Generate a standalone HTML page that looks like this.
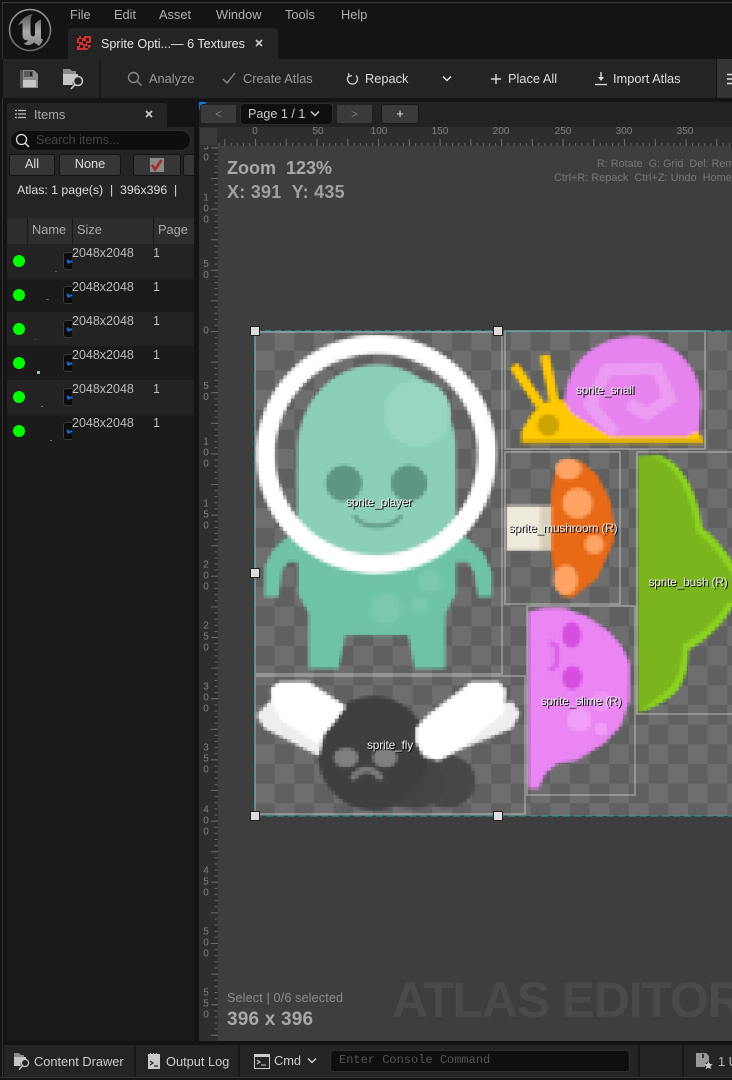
<!DOCTYPE html>
<html><head><meta charset="utf-8"><title>Sprite Optimizer</title>
<style>
html,body{margin:0;padding:0;background:#141414}
#r{position:relative;width:732px;height:1080px;overflow:hidden;background:#141414;font-family:"Liberation Sans",sans-serif;font-size:12.8px;color:#ccc}
.a{position:absolute}
.t{position:absolute;white-space:nowrap;line-height:16px}
.l{position:absolute;white-space:nowrap;line-height:16px;font-size:12px;color:#eee;text-shadow:1px 1px 0 #000;transform:translateX(-50%);letter-spacing:-.2px}
.m{color:#b0b0b0;top:7px}
.b{position:absolute;background:#363636;border:1px solid #111;border-radius:3px;box-sizing:border-box;text-align:center;color:#ddd;line-height:18px}
.rt{position:absolute;top:126px;font-size:10px;line-height:12px;color:#808080;transform:translateX(-50%)}
.rl{position:absolute;left:200px;width:12px;text-align:center;font-size:10px;line-height:11px;color:#808080;transform:translateY(-50%)}
.row{position:absolute;left:7px;width:187px;height:34px}
.dot{position:absolute;left:6px;top:11px;width:12px;height:12px;border-radius:50%;background:#0f0}
.th{position:absolute;left:56px;top:8px;width:9px;height:18px;background:#0c0c0c;border:1px solid #3a3a3a;border-right:0;border-radius:3px 0 0 3px;box-sizing:border-box}
.th:after{content:"";position:absolute;left:3px;top:6px;width:5px;height:4px;border-left:2px solid #1470d8;border-bottom:2px solid #1470d8;transform:rotate(-20deg);box-sizing:border-box}
.sz{position:absolute;left:65px;top:1px;line-height:16px;color:#bbb;font-size:12.5px}
.pg{position:absolute;left:146px;top:1px;line-height:16px;color:#bbb;font-size:12.5px}
.pd{position:absolute;width:1px;height:1px}
</style></head><body><div id="r">

<div class="a" style="left:2px;top:2px;width:730px;height:1px;background:#3a3a3a"></div>
<div class="a" style="left:2px;top:2px;width:1px;height:1076px;background:#333"></div>

<svg class="a" style="left:8px;top:8px" width="44" height="44" viewBox="0 0 44 44">
<defs><linearGradient id="lg" x1="0" y1="0" x2="0" y2="1"><stop offset="0" stop-color="#9a9a9a"/><stop offset="1" stop-color="#6a6a6a"/></linearGradient>
<linearGradient id="ug" x1="0" y1="0" x2="0" y2="1"><stop offset="0" stop-color="#555"/><stop offset=".55" stop-color="#aaa"/><stop offset="1" stop-color="#888"/></linearGradient></defs>
<circle cx="22" cy="22" r="20.5" fill="#111" stroke="url(#lg)" stroke-width="1.6"/>
<path fill="url(#ug)" d="M25 6 C19 7 13 11 10 18 C12 16 13 15.5 14.5 15 L14.5 27 C14.5 31 17 33 20 32 C19.5 33.5 17.5 35 15.5 35.5 C19 38 23 37.5 26 34.5 L31 38 C33 36 34.5 33.5 35 31 C33.5 31.5 33 31 33 29.5 L33 11.5 C31 12 29 13.5 27 16 L27 26 C27 28 25.5 29 24 28 C23 27.5 22.5 26.5 22.5 25 L22.5 12 C22.5 10 23.5 8 25 6Z"/>
</svg>

<div class="t m" style="left:70px">File</div>
<div class="t m" style="left:114px">Edit</div>
<div class="t m" style="left:159px">Asset</div>
<div class="t m" style="left:216px">Window</div>
<div class="t m" style="left:285px">Tools</div>
<div class="t m" style="left:341px">Help</div>

<div class="a" style="left:68px;top:28px;width:210px;height:31px;background:#242424;border-radius:4px 4px 0 0"></div>
<svg class="a" style="left:77px;top:36px" width="14" height="14" viewBox="0 0 14 14"><rect width="14" height="14" fill="#c33"/><path fill="#301010" d="M0 0h2v2H0zM4 0h3v2H4zM9 2h3v3H9zM2 3h3v3H2zM6 5h3v3H6zM0 7h2v3H0zM10 7h4v2h-4zM3 9h3v3H3zM8 10h3v2H8z"/><path fill="#242424" d="M14 14h-4l4-4z"/></svg>
<div class="t" style="left:101px;top:36px;color:#e6e6e6;font-size:12.6px">Sprite Opti...— 6 Textures</div>
<svg class="a" style="left:255px;top:39px" width="8" height="8"><path d="M1 1l6 6M7 1l-6 6" stroke="#ccc" stroke-width="1.6"/></svg>

<div class="a" style="left:0;top:59px;width:716px;height:39px;background:#242424"></div>
<div class="a" style="left:0;top:59px;width:3px;height:39px;background:#141414"></div>
<div class="a" style="left:717px;top:59px;width:15px;height:39px;background:#343434"></div>
<div class="a" style="left:99px;top:60px;width:2px;height:38px;background:#181818"></div>
<svg class="a" style="left:20px;top:70px" width="18" height="18" viewBox="0 0 18 18"><path fill="#8c8c8c" d="M0 0h14l4 4v14H0z"/><path fill="#555" d="M0 0h3v18H0z"/><rect x="4" y="1" width="9" height="6" fill="#5a5a5a"/><rect x="10" y="2" width="2" height="4" fill="#222"/><rect x="3" y="10" width="13" height="7" fill="#c8c8c8"/></svg>
<svg class="a" style="left:63px;top:69px" width="21" height="21" viewBox="0 0 21 21"><path fill="#8a8a8a" d="M0 0h7l2 2h4v3H0z"/><path fill="#c6c6c6" d="M0 5h15v3a6 6 0 0 0-5 8H0z"/><circle cx="15" cy="12" r="4.5" fill="none" stroke="#ccc" stroke-width="1.5"/><path d="M12 15.5L8 20" stroke="#ccc" stroke-width="1.6"/></svg>

<svg class="a" style="left:127px;top:71px" width="16" height="16" viewBox="0 0 16 16"><circle cx="6.5" cy="6.5" r="5" fill="none" stroke="#888" stroke-width="1.4"/><path d="M10.2 10.2L14.5 14.5" stroke="#888" stroke-width="1.4"/></svg>
<div class="t" style="left:149px;top:71px;color:#999">Analyze</div>
<svg class="a" style="left:222px;top:72px" width="14" height="13" viewBox="0 0 14 13"><path d="M1 7l4 4 8-10" fill="none" stroke="#888" stroke-width="1.4"/></svg>
<div class="t" style="left:243px;top:71px;color:#999">Create Atlas</div>
<svg class="a" style="left:346px;top:72px" width="13" height="14" viewBox="0 0 13 14"><path d="M3 3.5A5 5 0 1 0 10 3.5" fill="none" stroke="#ccc" stroke-width="1.3"/><path d="M2.5 1L3 4.5 6 3.5" fill="none" stroke="#ccc" stroke-width="1.2"/></svg>
<div class="t" style="left:365px;top:71px;color:#ddd">Repack</div>
<svg class="a" style="left:442px;top:75px" width="10" height="8"><path d="M1 1.5l4 4 4-4" fill="none" stroke="#ddd" stroke-width="1.5"/></svg>
<svg class="a" style="left:491px;top:74px" width="10" height="10"><path d="M5 0v10M0 5h10" stroke="#ddd" stroke-width="1.4"/></svg>
<div class="t" style="left:508px;top:71px;color:#ddd">Place All</div>
<svg class="a" style="left:595px;top:72px" width="12" height="14" viewBox="0 0 12 14"><path d="M6 0v7" stroke="#ddd" stroke-width="1.4"/><path d="M3 5h6L6 9z" fill="#ddd"/><path d="M0 12.5h12" stroke="#ddd" stroke-width="1.3"/></svg>
<div class="t" style="left:613px;top:71px;color:#ddd">Import Atlas</div>
<svg class="a" style="left:727px;top:73px" width="5" height="12"><path d="M0 1.5h5M0 6h5M0 10.5h5" stroke="#ddd" stroke-width="1.6"/></svg>

<!-- left panel -->
<div class="a" style="left:7px;top:103px;width:160px;height:24px;background:#242424;border-radius:3px 3px 0 0"></div>
<div class="a" style="left:7px;top:127px;width:187px;height:914px;background:#1a1a1a"></div>
<div class="a" style="left:7px;top:127px;width:187px;height:91px;background:#242424"></div>
<svg class="a" style="left:15px;top:109px" width="11" height="10"><path d="M3 1.5h8M3 5h8M3 8.5h8M0 1.5h2M0 5h2M0 8.5h2" stroke="#bbb" stroke-width="1.2"/></svg>
<div class="t" style="left:34px;top:107px;color:#aaa">Items</div>
<svg class="a" style="left:145px;top:110px" width="8" height="8"><path d="M1 1l6 6M7 1l-6 6" stroke="#ccc" stroke-width="1.7"/></svg>
<div class="a" style="left:10px;top:130px;width:181px;height:21px;background:#0e0e0e;border:1px solid #2c2c2c;border-radius:11px;box-sizing:border-box"></div>
<svg class="a" style="left:15px;top:133px" width="15" height="15" viewBox="0 0 15 15"><circle cx="6.5" cy="6.5" r="5" fill="none" stroke="#ddd" stroke-width="1.3"/><path d="M10 10l4 4" stroke="#ddd" stroke-width="1.5"/></svg>
<div class="t" style="left:36px;top:132px;color:#444;font-size:12.5px">Search items...</div>
<div class="b" style="left:9px;top:154px;width:46px;height:22px">All</div>
<div class="b" style="left:59px;top:154px;width:62px;height:22px">None</div>
<div class="b" style="left:133px;top:154px;width:48px;height:22px"></div>
<div class="b" style="left:183px;top:154px;width:11px;height:22px;border-right:0;border-radius:3px 0 0 3px"></div>
<svg class="a" style="left:150px;top:158px" width="14" height="14" viewBox="0 0 14 14"><rect width="14" height="14" fill="#8a8a8a"/><path d="M2 7l3 4.5L11.5 2" fill="none" stroke="#a52a2a" stroke-width="2.6"/></svg>
<div class="t" style="left:17px;top:182px;color:#ddd;font-size:12.3px;white-space:pre">Atlas: 1 page(s)  |  396x396  |</div>

<div class="a" style="left:7px;top:218px;width:187px;height:26px;background:#2e2e2e"></div>
<div class="a" style="left:27px;top:218px;width:1px;height:26px;background:#181818"></div>
<div class="a" style="left:72px;top:218px;width:1px;height:26px;background:#181818"></div>
<div class="a" style="left:153px;top:218px;width:1px;height:26px;background:#181818"></div>
<div class="t" style="left:32px;top:222px;color:#aaa">Name</div>
<div class="t" style="left:77px;top:222px;color:#aaa">Size</div>
<div class="t" style="left:158px;top:222px;color:#aaa">Page</div>

<div class="row" style="top:244px;background:#232323"><div class="dot"></div><div class="th"></div><div class="sz">2048x2048</div><div class="pg">1</div><div class="pd" style="left:48px;top:27px;background:#5a6a30;width:2px"></div></div>
<div class="row" style="top:278px;background:#1b1b1b"><div class="dot"></div><div class="th"></div><div class="sz">2048x2048</div><div class="pg">1</div><div class="pd" style="left:39px;top:21px;background:#666;width:3px"></div></div>
<div class="row" style="top:312px;background:#232323"><div class="dot"></div><div class="th"></div><div class="sz">2048x2048</div><div class="pg">1</div><div class="pd" style="left:28px;top:27px;background:#6a4a3a"></div></div>
<div class="row" style="top:346px;background:#1b1b1b"><div class="dot"></div><div class="th"></div><div class="sz">2048x2048</div><div class="pg">1</div><div class="pd" style="left:30px;top:25px;background:#8fbfae;width:3px;height:3px"></div></div>
<div class="row" style="top:380px;background:#232323"><div class="dot"></div><div class="th"></div><div class="sz">2048x2048</div><div class="pg">1</div><div class="pd" style="left:34px;top:26px;background:#8a5a90;width:2px"></div></div>
<div class="row" style="top:414px;background:#1b1b1b"><div class="dot"></div><div class="th"></div><div class="sz">2048x2048</div><div class="pg">1</div><div class="pd" style="left:43px;top:26px;background:#905a70;width:2px"></div></div>

<!-- page bar -->
<div class="a" style="left:199px;top:102px;width:533px;height:25px;background:#222"></div>
<svg class="a" style="left:199px;top:102px" width="8" height="8"><path d="M0 0h8L0 8z" fill="#1476e0"/></svg>
<div class="b" style="left:200px;top:104px;width:37px;height:20px;background:#3a3a3a;border-color:#222;color:#777;font-size:12px">&lt;</div>
<div class="a" style="left:240px;top:103px;width:93px;height:22px;background:#0f0f0f;border:1px solid #2c2c2c;border-radius:4px;box-sizing:border-box"></div>
<div class="t" style="left:248px;top:106px;color:#ccc;font-size:12.6px">Page 1 / 1</div>
<svg class="a" style="left:310px;top:110px" width="10" height="8"><path d="M1 1.5l4 4 4-4" fill="none" stroke="#ccc" stroke-width="1.5"/></svg>
<div class="b" style="left:336px;top:104px;width:37px;height:20px;background:#3a3a3a;border-color:#222;color:#777;font-size:12px">&gt;</div>
<div class="b" style="left:381px;top:104px;width:38px;height:20px;background:#3a3a3a;border-color:#181818;color:#eee;font-size:13px">+</div>

<!-- viewport -->
<svg class="a" style="left:0;top:0" width="732" height="1080" viewBox="0 0 732 1080">
<defs>
<pattern id="ck" x="255" y="331" width="39.36" height="39.36" patternUnits="userSpaceOnUse">
<rect width="39.36" height="39.36" fill="#606060"/>
<rect x="19.68" width="19.68" height="19.68" fill="#6e6e6e"/>
<rect y="19.68" width="19.68" height="19.68" fill="#6e6e6e"/>
</pattern>
<filter id="px" filterUnits="userSpaceOnUse" x="251" y="327" width="500" height="500" color-interpolation-filters="sRGB">
<feGaussianBlur in="SourceGraphic" stdDeviation="1.3" result="s"/>
<feFlood x="256" y="332" width="2" height="2" flood-color="#000"/>
<feComposite x="255" y="331" width="4" height="4"/>
<feTile x="251" y="327" width="500" height="500" result="a"/>
<feComposite in="s" in2="a" operator="in"/>
<feMorphology operator="dilate" radius="1"/>
</filter>
<clipPath id="cv"><rect x="218" y="146" width="514" height="895"/></clipPath>
</defs>
<rect x="199" y="127" width="533" height="914" fill="#2e2e2e"/>
<rect x="200" y="128" width="17" height="17" fill="#3a3a3a"/>
<rect x="218" y="146" width="514" height="895" fill="#3e3e3e"/>
<line x1="224.25" y1="142.5" x2="732" y2="142.5" stroke="#6a6a6a" stroke-width="7" stroke-dasharray="1 29.75"/>
<line x1="218.4" y1="144.5" x2="732" y2="144.5" stroke="#6a6a6a" stroke-width="3" stroke-dasharray="1 5.15"/>
<line x1="214.5" y1="147.4" x2="214.5" y2="1041" stroke="#6a6a6a" stroke-width="7" stroke-dasharray="1 29.6"/>
<line x1="216" y1="147.4" x2="216" y2="1041" stroke="#6a6a6a" stroke-width="3" stroke-dasharray="1 5.12"/>

<g clip-path="url(#cv)">
<rect x="255" y="331" width="487" height="485" fill="url(#ck)"/>
<g filter="url(#px)">
 <!-- player -->
 <g transform="translate(245 320) scale(.33333)">
  <path fill="#6fc3a8" d="M130 650L85 690 60 740 60 830 100 830 110 750 130 725 160 725 160 820 192 880 192 1045 280 1045 300 945 490 945 510 1045 600 1045 600 880 632 820 632 725 670 725 690 760 700 830 740 830 740 760 715 700 660 650Z"/>
  <circle cx="423" cy="868" r="45" fill="#7ac9af"/><circle cx="522" cy="855" r="22" fill="#7ac9af"/><circle cx="555" cy="783" r="33" fill="#7ac9af"/>
  <path fill="#8ccfb8" d="M158 400C158 240 270 135 395 135S632 240 632 400L632 600 500 710 280 710 158 600Z"/>
  <circle cx="518" cy="280" r="98" fill="#98d6c2"/>
  <circle cx="297" cy="490" r="56" fill="#5d9683"/><circle cx="492" cy="490" r="56" fill="#5d9683"/>
  <path d="M328 585C345 630 450 630 468 585" fill="none" stroke="#679f8c" stroke-width="17"/>
  <ellipse cx="394" cy="403" rx="332" ry="330" fill="none" stroke="#fff" stroke-width="54"/>
 </g>
 <!-- fly -->
 <g transform="translate(245 670) scale(.33333)">
  <ellipse cx="605" cy="335" rx="85" ry="78" fill="#474747"/>
  <ellipse cx="500" cy="340" rx="105" ry="74" fill="#444"/>
  <ellipse cx="385" cy="250" rx="165" ry="170" fill="#3f3f3f"/>
  <ellipse cx="303" cy="263" rx="36" ry="28" fill="#808080"/><ellipse cx="420" cy="263" rx="36" ry="28" fill="#808080"/>
  <path d="M322 328C340 290 390 290 408 328" fill="none" stroke="#7a7a7a" stroke-width="17"/>
  <path fill="#eee" d="M36 135L80 90 240 180 222 258 130 210 60 175Z"/>
  <path fill="#fff" d="M78 55L105 36 190 36 302 110 265 160 215 218 110 150 80 90Z"/>
  <path fill="#eee" d="M540 262L640 240 800 175 824 130 800 95 600 150Z"/>
  <path fill="#fff" d="M513 175L550 135 680 36 760 36 782 60 777 125 640 240 580 272 535 257 513 215Z"/>
 </g>
 <!-- snail -->
 <g transform="translate(500 325) scale(.33333)">
  <path fill="#e683ef" d="M195 235C195 110 300 35 400 35C510 35 602 120 602 235L595 335 330 345 210 270Z"/>
  <path d="M345 325L270 240 320 135 470 130 510 220 440 268 385 235" fill="none" stroke="#eb9cf2" stroke-width="34"/>
  <path d="M42 122L120 240M134 92L165 240" stroke="#ffc800" stroke-width="26" fill="none"/>
  <path fill="#ffc800" d="M65 355L65 320 95 270 125 235 150 230 190 225 215 265 330 335 560 335 590 320 610 345 610 355Z"/>
  <rect x="65" y="343" width="545" height="12" fill="#d8ab00"/>
  <circle cx="145" cy="300" r="34" fill="#cca300"/>
 </g>
 <!-- mushroom -->
 <g transform="translate(500 325) scale(.33333)">
  <rect x="20" y="543" width="135" height="132" fill="#efebdc"/><rect x="120" y="543" width="35" height="132" fill="#d8d0bc"/>
  <path fill="#e86a17" d="M155 510L165 450 180 410 240 408 290 450 330 530 342 600 340 650 290 760 215 818 185 812 160 720 153 660Z"/>
  <ellipse cx="205" cy="432" rx="38" ry="30" fill="#ffa463"/><circle cx="233" cy="535" r="44" fill="#ffa463"/><circle cx="283" cy="658" r="28" fill="#ffa463"/><ellipse cx="197" cy="765" rx="35" ry="44" fill="#ffa463"/>
 </g>
 <!-- bush -->
 <path fill="#8cd41e" d="M638 457L657 455C675 460 695 480 702 528C712 535 725 550 732 562C742 575 750 590 750 600L732 607C722 625 705 640 688 650C688 665 685 680 677 690C668 700 653 708 639 712Z"/>
 <path fill="#7ab51d" d="M638 457L652 456C670 461 690 482 697 532C707 539 720 554 727 566C737 579 745 592 745 600L728 603C718 620 700 636 683 645C683 662 680 676 672 686C663 696 650 704 638 712Z"/>
 <!-- slime -->
 <g transform="translate(520 600) scale(.33333)">
  <path fill="#ea85f3" d="M27 35L75 25 130 25 200 50 260 90 305 140 328 190 328 300 300 380 250 430 170 480 110 490 75 520 55 565 27 565Z"/>
  <ellipse cx="155" cy="105" rx="30" ry="40" fill="#d64ee0"/><ellipse cx="157" cy="233" rx="31" ry="37" fill="#d64ee0"/>
  <path d="M88 125L110 140 110 195 88 212" fill="none" stroke="#db5fe8" stroke-width="17"/>
  <circle cx="178" cy="360" r="35" fill="#f09ff5"/><circle cx="245" cy="305" r="30" fill="#ee96f4"/><circle cx="243" cy="387" r="17" fill="#f09ff5"/>
 </g>
</g>
<g fill="none" stroke="#fff" stroke-opacity=".28" stroke-width="2">
 <rect x="255" y="332" width="247" height="342"/>
 <rect x="505" y="331" width="200" height="118"/>
 <rect x="505" y="452" width="115" height="152"/>
 <rect x="637" y="452" width="110" height="262"/>
 <rect x="527" y="606" width="108" height="189"/>
 <rect x="255" y="676" width="270" height="138"/>
</g>
<line x1="255" y1="331" x2="732" y2="331" stroke="#20b4b4" stroke-width="1" stroke-dasharray="6 4"/>
<line x1="255" y1="331" x2="255" y2="816" stroke="#20b4b4" stroke-width="1" stroke-dasharray="6 4"/>
<line x1="255" y1="816" x2="732" y2="816" stroke="#12a8a8" stroke-width="1" stroke-dasharray="7 4"/>
<g fill="#dcdcdc" stroke="#222" stroke-width="1">
 <rect x="250.5" y="326.5" width="9" height="9"/><rect x="493.5" y="326.5" width="9" height="9"/>
 <rect x="250.5" y="568.5" width="9" height="9"/><rect x="250.5" y="811.5" width="9" height="9"/>
 <rect x="493.5" y="811.5" width="9" height="9"/>
</g>
</g>
</svg>

<div class="rt" style="left:255px">0</div><div class="rt" style="left:318px">50</div><div class="rt" style="left:379px">100</div><div class="rt" style="left:440px">150</div><div class="rt" style="left:501px">200</div><div class="rt" style="left:563px">250</div><div class="rt" style="left:624px">300</div><div class="rt" style="left:685px">350</div>

<div class="a" style="left:199px;top:146px;width:13px;height:895px;overflow:hidden">
<div class="rl" style="left:1px;top:1.4px">1<br>5<br>0</div>
<div class="rl" style="left:1px;top:62.6px">1<br>0<br>0</div>
<div class="rl" style="left:1px;top:123.8px">5<br>0</div>
<div class="rl" style="left:1px;top:185px">0</div>
<div class="rl" style="left:1px;top:246.2px">5<br>0</div>
<div class="rl" style="left:1px;top:307.4px">1<br>0<br>0</div>
<div class="rl" style="left:1px;top:368.6px">1<br>5<br>0</div>
<div class="rl" style="left:1px;top:429.8px">2<br>0<br>0</div>
<div class="rl" style="left:1px;top:491px">2<br>5<br>0</div>
<div class="rl" style="left:1px;top:552.2px">3<br>0<br>0</div>
<div class="rl" style="left:1px;top:613.4px">3<br>5<br>0</div>
<div class="rl" style="left:1px;top:674.6px">4<br>0<br>0</div>
<div class="rl" style="left:1px;top:735.8px">4<br>5<br>0</div>
<div class="rl" style="left:1px;top:797px">5<br>0<br>0</div>
<div class="rl" style="left:1px;top:858.2px">5<br>5<br>0</div>
</div>

<div class="l" style="left:379px;top:494px">sprite_player</div>
<div class="l" style="left:605px;top:382px">sprite_snail</div>
<div class="l" style="left:563px;top:520px">sprite_mushroom (R)</div>
<div class="l" style="left:688px;top:574px">sprite_bush (R)</div>
<div class="l" style="left:581px;top:693px">sprite_slime (R)</div>
<div class="l" style="left:390px;top:737px">sprite_fly</div>

<div class="t" style="left:227px;top:158px;line-height:20px;font-size:18px;font-weight:bold;color:#a8a8a8;white-space:pre">Zoom  123%</div>
<div class="t" style="left:227px;top:182px;line-height:20px;font-size:18px;font-weight:bold;color:#a0a0a0;white-space:pre;letter-spacing:.25px">X: 391  Y: 435</div>
<div class="t" style="left:597px;top:156px;font-size:10.8px;color:#777;white-space:pre">R: Rotate  G: Grid  Del: Remove</div>
<div class="t" style="left:554px;top:170px;font-size:10.8px;color:#777;white-space:pre;letter-spacing:.06px">Ctrl+R: Repack  Ctrl+Z: Undo  Home: Fit</div>
<div class="t" style="left:227px;top:990px;font-size:12.6px;color:#8c8c8c;letter-spacing:.14px">Select | 0/6 selected</div>
<div class="t" style="left:227px;top:1009px;line-height:22px;font-size:19px;font-weight:bold;color:#a8a8a8;letter-spacing:.2px">396 x 396</div>
<div class="t" style="left:392px;top:970px;line-height:60px;font-size:50px;font-weight:bold;color:#4a4a4a;letter-spacing:-1.2px">ATLAS EDITOR</div>

<!-- status bar -->
<div class="a" style="left:4px;top:1045px;width:728px;height:32px;background:#242424"></div>
<div class="a" style="left:134px;top:1045px;width:2px;height:32px;background:#171717"></div>
<div class="a" style="left:238px;top:1045px;width:2px;height:32px;background:#171717"></div>
<div class="a" style="left:638px;top:1045px;width:2px;height:32px;background:#171717"></div>
<div class="a" style="left:682px;top:1045px;width:2px;height:32px;background:#171717"></div>
<svg class="a" style="left:14px;top:1053px" width="16" height="17" viewBox="0 0 16 17"><path fill="#8a8a8a" d="M0 0h5l2 2h3v2H0z"/><path fill="#c6c6c6" d="M0 4h12v2a5 5 0 0 0-5 7H0z"/><circle cx="11" cy="10" r="3.6" fill="none" stroke="#ccc" stroke-width="1.2"/><path d="M8.5 13L5 16.5" stroke="#ccc" stroke-width="1.3"/></svg>
<div class="t" style="left:34px;top:1054px;color:#ccc">Content Drawer</div>
<svg class="a" style="left:148px;top:1053px" width="12" height="16" viewBox="0 0 12 16"><path fill="#c8c8c8" d="M0 1h2V0h1v1h2V0h1v1h2V0h1v1h3v15H0z"/><path d="M2 8l3 2-3 2M6 13h4" fill="none" stroke="#222" stroke-width="1.2"/></svg>
<div class="t" style="left:166px;top:1054px;color:#ccc">Output Log</div>
<svg class="a" style="left:254px;top:1054px" width="16" height="15" viewBox="0 0 16 15"><rect x=".5" y=".5" width="15" height="14" fill="none" stroke="#ccc"/><rect x="1" y="1" width="14" height="2" fill="#ccc"/><path d="M3 6l3 2-3 2M7 11h5" fill="none" stroke="#ccc" stroke-width="1.1"/></svg>
<div class="t" style="left:274px;top:1053px;color:#ccc">Cmd</div>
<svg class="a" style="left:307px;top:1057px" width="10" height="8"><path d="M1 1.5l4 4 4-4" fill="none" stroke="#ccc" stroke-width="1.4"/></svg>
<div class="a" style="left:330px;top:1050px;width:300px;height:22px;background:#0f0f0f;border:1px solid #2e2e2e;border-radius:4px;box-sizing:border-box"></div>
<div class="t" style="left:339px;top:1052px;font-family:'Liberation Mono',monospace;font-size:12px;color:#555">Enter Console Command</div>
<svg class="a" style="left:696px;top:1053px" width="17" height="17" viewBox="0 0 17 17"><path fill="#999" d="M0 0h10l3 3v5l-3 2-1 4H0z"/><rect x="6" y="1" width="2" height="4" fill="#333"/><path fill="#ccc" d="M12.5 8l1.3 3 3 .2-2.3 2 .8 3-2.8-1.6-2.8 1.6.8-3-2.3-2 3-.2z"/></svg>
<div class="t" style="left:718px;top:1054px;color:#bbb">1 U</div>
<div class="a" style="left:0;top:1077px;width:732px;height:1px;background:#333"></div>

</div></body></html>
